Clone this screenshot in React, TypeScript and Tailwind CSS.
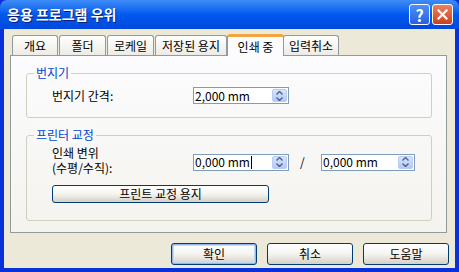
import React from "react";

const font = { fontFamily: '"Noto Sans CJK KR", "Liberation Sans", sans-serif' };

const tabs = [
  { label: "개요", w: "w-[46px]" },
  { label: "폴더", w: "w-[47px]" },
  { label: "로케일", w: "w-[47px]" },
  { label: "저장된 용지", w: "w-[72px]" },
  { label: "인쇄 중", w: "w-[57px]", active: true },
  { label: "입력취소", w: "w-[56px]" },
];

// spin box arrows
const Spinner = () => (
  <div className="my-[1px] mr-[1px] w-[15px] rounded-[2px] bg-gradient-to-b from-[#D8E4FC] to-[#B4C8F6] border border-[#B9CCF5] flex flex-col items-center justify-center gap-[2px]">
    <svg width="7" height="4" viewBox="0 0 7 4">
      <path d="M0.5 3.5 L3.5 0.5 L6.5 3.5" fill="none" stroke="#4D6185" strokeWidth="1.4" />
    </svg>
    <svg width="7" height="4" viewBox="0 0 7 4">
      <path d="M0.5 0.5 L3.5 3.5 L6.5 0.5" fill="none" stroke="#4D6185" strokeWidth="1.4" />
    </svg>
  </div>
);

const SpinBox = ({ value, caret, w }: { value: string; caret?: boolean; w: string }) => (
  <div className={`${w} h-[17px] flex border border-[#7F9DB9] bg-white`}>
    <div className="flex-1 flex items-center pl-[1px] text-[12px] leading-none text-black">
      {value}
      {caret && <span className="ml-[1px] w-[1px] h-[13px] bg-black" />}
    </div>
    <Spinner />
  </div>
);

const XPButton = ({ label, className }: { label: string; className: string }) => (
  <button
    className={`${className} rounded-[3px] border border-[#003C74] bg-gradient-to-b from-[#FFFFFF] via-[#F4F4F0] to-[#D6D0C5] text-[12px] leading-none text-black flex items-center justify-center`}
  >
    {label}
  </button>
);

const GroupBox = ({ title, className, children }: { title: string; className: string; children: React.ReactNode }) => (
  <div className={`${className} relative rounded-[3px] border border-[#D0D0BF]`}>
    <span className="absolute -top-[9px] left-[7px] px-[2px] bg-[#FAFAF8] text-[12px] leading-[16px] text-[#0046D5]">
      {title}
    </span>
    {children}
  </div>
);

export default function App() {
  return (
    <div className="w-[459px] h-[272px] flex flex-col bg-[#0831D9] overflow-hidden" style={font}>
      {/* title bar */}
      <div className="h-[29px] flex items-center pl-[7px] pr-[6px] rounded-t-[7px] bg-gradient-to-b from-[#3D8CF6] via-[#0058EE] to-[#0048DC]">
        <span className="flex-1 text-white font-bold text-[14px] [text-shadow:1px_1px_0_#0A1E78]">응용 프로그램 우위</span>
        <div className="w-[21px] h-[21px] rounded-[3px] border border-white bg-gradient-to-b from-[#4F8FF8] to-[#2860E0] flex items-center justify-center text-white font-bold text-[16px] leading-none">
          ?
        </div>
        <div className="ml-[2px] w-[21px] h-[21px] rounded-[3px] border border-white bg-gradient-to-b from-[#EA8060] to-[#C8401E] flex items-center justify-center">
          <svg width="11" height="11" viewBox="0 0 11 11">
            <path d="M1.5 1.5 L9.5 9.5 M9.5 1.5 L1.5 9.5" stroke="white" strokeWidth="2.2" strokeLinecap="square" />
          </svg>
        </div>
      </div>

      {/* body */}
      <div className="flex-1 mx-[4px] mb-[4px] bg-[#ECE9D8] flex flex-col">
        {/* tabs */}
        <div className="flex items-end pl-[8px] pt-[4px] h-[26px]">
          {tabs.map((t) =>
            t.active ? (
              <div
                key={t.label}
                className={`${t.w} h-[22px] -mx-[1px] -mb-[1px] relative z-10 rounded-t-[3px] border border-b-0 border-[#919B9C] border-t-[3px] border-t-[#F3A640] bg-[#FCFCFE] flex items-center justify-center text-[12px] leading-none text-black`}
              >
                {t.label}
              </div>
            ) : (
              <div
                key={t.label}
                className={`${t.w} h-[20px] mr-[1px] rounded-t-[3px] border border-b-0 border-[#919B9C] bg-gradient-to-b from-[#FFFFFF] to-[#ECEBE6] flex items-center justify-center text-[12px] leading-none text-black`}
              >
                {t.label}
              </div>
            )
          )}
        </div>

        {/* tab panel */}
        <div className="ml-[6px] w-[437px] h-[178px] border border-[#919B9C] bg-gradient-to-b from-[#FCFCFE] to-[#F4F3EE] pt-[17px] pl-[15px]">
          <GroupBox title="번지기" className="w-[406px] h-[45px] flex items-center">
            <span className="ml-[25px] w-[141px] text-[12px] text-black">번지기 간격:</span>
            <SpinBox value="2,000 mm" w="w-[96px]" />
          </GroupBox>

          <GroupBox title="프린터 교정" className="mt-[17px] w-[406px] h-[86px]">
            <div className="flex items-start mt-[9px]">
              <div className="ml-[25px] w-[141px] text-[12px] leading-[15px] text-black">
                <div>인쇄 변위</div>
                <div>(수평/수직):</div>
              </div>
              <div className="mt-[8px] flex items-center">
                <SpinBox value="0,000 mm" caret w="w-[96px]" />
                <span className="ml-[11px] w-[21px] text-[12px] text-black">/</span>
                <SpinBox value="0,000 mm" w="w-[94px]" />
              </div>
            </div>
            <XPButton label="프린트 교정 용지" className="mt-[10px] ml-[25px] w-[217px] h-[18px]" />
          </GroupBox>
        </div>

        {/* bottom buttons */}
        <div className="flex justify-end gap-[10px] pr-[6px] mt-[10px]">
          <XPButton label="확인" className="w-[86px] h-[22px] border-[#003C74] shadow-[inset_0_0_0_1px_#98B8EA,inset_0_0_0_2px_#C4D7F6]" />
          <XPButton label="취소" className="w-[86px] h-[22px]" />
          <XPButton label="도움말" className="w-[86px] h-[22px]" />
        </div>
      </div>
    </div>
  );
}
